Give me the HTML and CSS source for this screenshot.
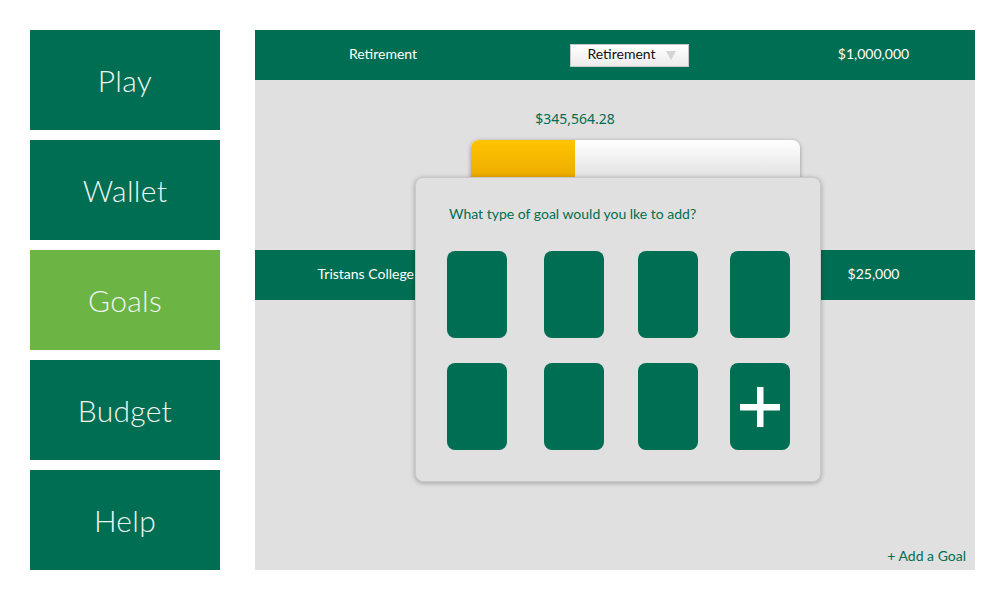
FILE: index.html
```html
<!DOCTYPE html>
<html>
<head>
<meta charset="utf-8">
<link rel="stylesheet" href="styles.css">
</head>
<body>
<div class="app">
  <nav class="sidebar">
    <div class="nav-item">Play</div>
    <div class="nav-item">Wallet</div>
    <div class="nav-item active">Goals</div>
    <div class="nav-item">Budget</div>
    <div class="nav-item">Help</div>
  </nav>
  <main class="main">
    <div class="goal-row">
      <div class="col col-name">Retirement</div>
      <div class="col col-select">
        <div class="select"><span>Retirement</span><span class="arrow"></span></div>
      </div>
      <div class="col col-amount">$1,000,000</div>
    </div>
    <div class="progress-block">
      <div class="progress-label" style="width:208px">$345,564.28</div>
      <div class="progress">
        <div class="progress-fill" style="width:104px"></div>
      </div>
    </div>
    <div class="goal-row second">
      <div class="col col-name">Tristans College Fund</div>
      <div class="col col-select"></div>
      <div class="col col-amount">$25,000</div>
    </div>
    <div class="footer">+ Add a Goal</div>

    <div class="modal">
      <div class="modal-title">What type of goal would you lke to add?</div>
      <div class="tiles">
        <div class="tile"></div>
        <div class="tile"></div>
        <div class="tile"></div>
        <div class="tile"></div>
        <div class="tile"></div>
        <div class="tile"></div>
        <div class="tile"></div>
        <div class="tile add">
          <svg width="42" height="42" viewBox="0 0 42 42"><rect x="18" y="1" width="6.5" height="40" fill="#fff"/><rect x="1" y="18" width="40" height="6.5" fill="#fff"/></svg>
        </div>
      </div>
    </div>
  </main>
</div>
</body>
</html>
```

FILE: styles.css
```css
* { box-sizing: border-box; }
html, body { margin: 0; padding: 0; background: #fff; }
body { font-family: Lato, "Open Sans", sans-serif; }

.app {
  display: flex;
  gap: 35px;
  padding: 30px;
}

.sidebar {
  flex: 0 0 190px;
  display: flex;
  flex-direction: column;
  gap: 10px;
}
.nav-item {
  height: 100px;
  background: #006e52;
  color: #eef5f1;
  font-size: 30px;
  font-weight: 300;
  display: flex;
  align-items: center;
  justify-content: center;
  letter-spacing: 0.3px;
}
.nav-item.active { background: #6cb444; }

.main {
  position: relative;
  flex: 0 0 720px;
  height: 540px;
  background: #e0e0e0;
  display: flex;
  flex-direction: column;
}

.goal-row {
  height: 50px;
  background: #006e52;
  color: #fff;
  display: flex;
  align-items: center;
  font-size: 14px;
  line-height: 18px;
  padding-bottom: 3px;
}
.goal-row.second { margin-top: 65px; }
.col-name { width: 256px; text-align: center; }
.col-select { width: 237px; display: flex; justify-content: center; padding-top: 3px; }
.col-amount { flex: 1; text-align: center; padding-left: 24px; }

.select {
  width: 119px;
  height: 23px;
  background: linear-gradient(#ffffff, #ececec);
  border: 1px solid #c9c9c9;
  color: #111;
  font-size: 14px;
  display: flex;
  align-items: center;
  justify-content: center;
  gap: 10px;
  padding-left: 4px;
  padding-bottom: 2px;
}
.arrow {
  width: 0; height: 0;
  border-left: 5px solid transparent;
  border-right: 5px solid transparent;
  border-top: 9px solid #d4d4d4;
  margin-top: 2px;
}

.progress-block {
  padding-left: 216px;
  margin-top: 30px;
}
.progress-label {
  text-align: center;
  color: #006e52;
  font-family: "Noto Sans", sans-serif;
  font-size: 14px;
  line-height: 18px;
}
.progress {
  margin-top: 12px;
  width: 329px;
  height: 45px;
  border-radius: 8px 8px 0 0;
  background: linear-gradient(#ffffff, #dcdcdc);
  box-shadow: 0 1px 4px rgba(0,0,0,0.35);
  overflow: hidden;
}
.progress-fill {
  height: 100%;
  background: linear-gradient(#ffc400, #e9a600);
}

.footer {
  margin-top: auto;
  align-self: flex-end;
  padding: 0 9px 6px 0;
  color: #006e52;
  font-size: 14px;
}

.modal {
  position: absolute;
  left: 160px;
  top: 147px;
  width: 406px;
  height: 305px;
  background: #e0e0e0;
  border-radius: 8px;
  border: 1px solid #c9c9c9;
  box-shadow: 0 1px 5px rgba(0,0,0,0.3);
  padding: 27px 31px 0 31px;
}
.modal-title {
  color: #006e52;
  font-size: 14px;
  line-height: 18px;
  padding-left: 2px;
}
.tiles {
  margin-top: 28px;
  display: grid;
  grid-template-columns: 97px 94px 92px 60px;
  row-gap: 25px;
}
.tile {
  width: 60px;
  height: 87px;
  background: #006e52;
  border-radius: 8px;
}
.tile.add {
  display: flex;
  align-items: center;
  justify-content: center;
}
```
